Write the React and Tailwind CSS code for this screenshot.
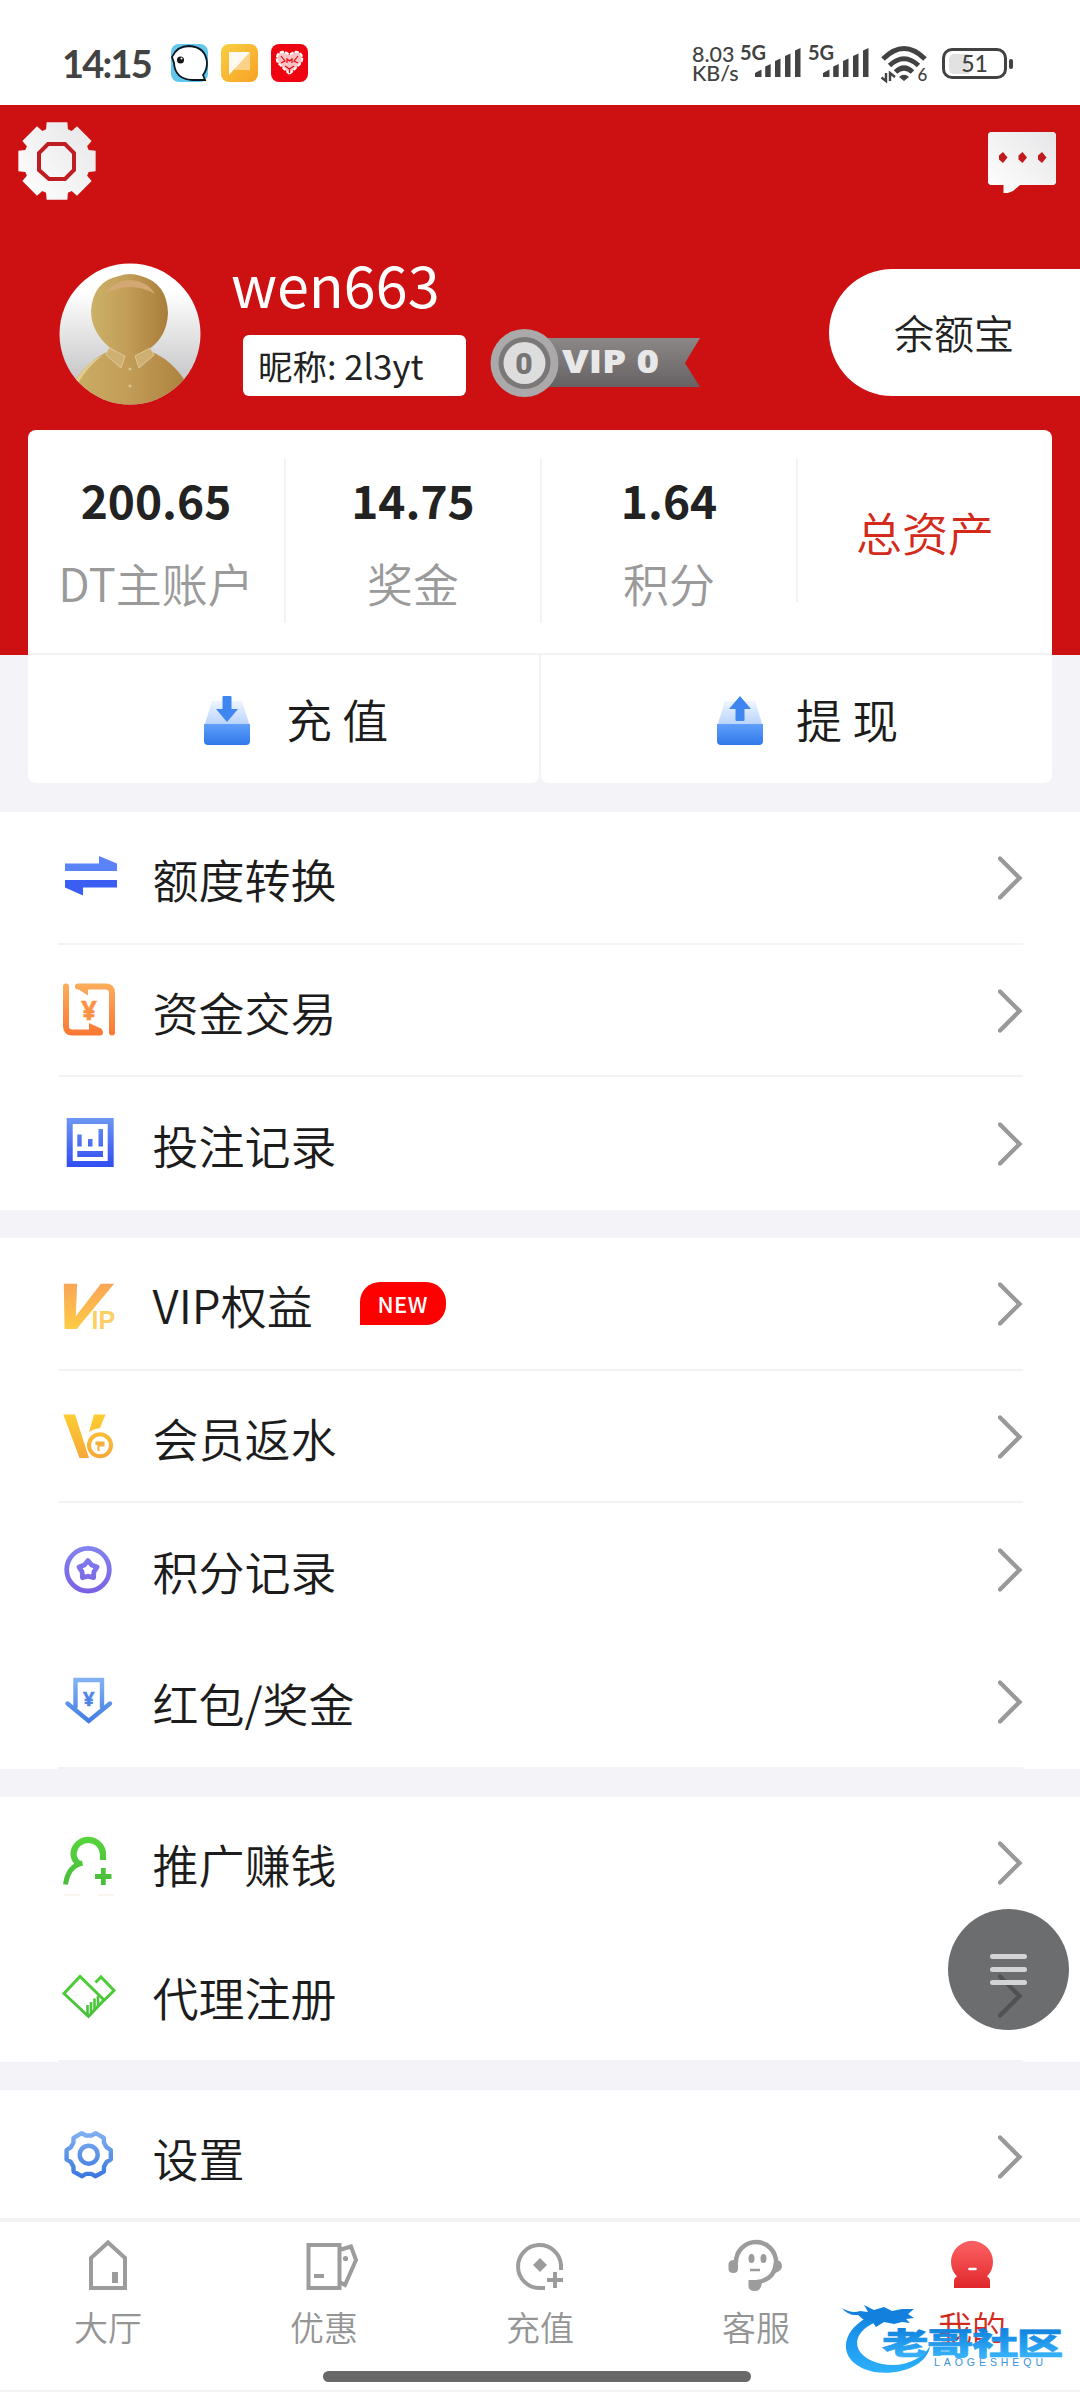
import React from "react";
import clsx from "clsx";

// closed gear outline: n teeth between the root and tip radius
const gearPath = (cx, cy, tip, root, n, tipHalf, rootHalf) => {
  const pts = [];
  for (let i = 0; i < n; i++) {
    const mid = (i * 360) / n;
    [[root, -rootHalf], [tip, -tipHalf], [tip, tipHalf], [root, rootHalf]].forEach(([r, off]) => {
      const a = ((mid + off) * Math.PI) / 180;
      pts.push(`${(cx + r * Math.cos(a)).toFixed(2)} ${(cy + r * Math.sin(a)).toFixed(2)}`);
    });
  }
  return `M${pts.join("L")}Z`;
};

const starPath = (cx, cy, outer, inner) => {
  const pts = [];
  for (let i = 0; i < 10; i++) {
    const r = i % 2 ? inner : outer;
    const a = ((i * 36 - 90) * Math.PI) / 180;
    pts.push(`${(cx + r * Math.cos(a)).toFixed(2)} ${(cy + r * Math.sin(a)).toFixed(2)}`);
  }
  return `M${pts.join("L")}Z`;
};

function Gradient({ id, from, to }) {
  return (
    <linearGradient id={id} x1="0" y1="0" x2="0" y2="56" gradientUnits="userSpaceOnUse">
      <stop stopColor={from} />
      <stop offset="1" stopColor={to} />
    </linearGradient>
  );
}

function MenuIcon({ id, from, to, children }) {
  return (
    <svg className="w-14 h-14 shrink-0 overflow-visible" viewBox="0 0 56 56" fill="none">
      <defs><Gradient id={id} from={from} to={to} /></defs>
      {children}
    </svg>
  );
}

const TransferIcon = () => (
  <MenuIcon id="transfer" from="#6c95fb" to="#2f4ff0">
    <path d="M3 13.5H37V6L55 13.5V21H3Z" fill="#5b83f8" />
    <path d="M3 30H55V37.5H21V45.5L3 37.5Z" fill="#3a5ef2" />
  </MenuIcon>
);

const FundsIcon = () => (
  <MenuIcon id="funds" from="#fbae5c" to="#fb7430">
    <path d="M4 3.5V43Q4 49.5 10.5 49.5H38M50 49.5V10Q50 3.5 43.5 3.5H16" stroke="url(#funds)" strokeWidth="6" strokeLinecap="round" />
    <path d="M13 4L26 12.5V3ZM27 40L40 46V51H27Z" fill="url(#funds)" />
    <text x="27" y="37" textAnchor="middle" fontSize="27" fontWeight="700" fontFamily="Noto Sans" fill="#fb9243" stroke="#fb9243" strokeWidth=".6">¥</text>
  </MenuIcon>
);

const BetsIcon = () => (
  <MenuIcon id="bets" from="#6f9af2" to="#2a45f3">
    <path d="M7.7 5H48.7V48H7.7Z" stroke="url(#bets)" strokeWidth="6" />
    <path d="M15.3 18.5H19.7V30.5H15.3ZM26 23H30.5V30.5H26ZM36.5 13H41V30.5H36.5ZM15.3 35H41V41H15.3Z" fill="url(#bets)" />
  </MenuIcon>
);

const VipIcon = () => (
  <MenuIcon id="vip" from="#fba650" to="#fdd052">
    <defs>
      <linearGradient id="vipV" x1="0" y1="-45" x2="0" y2="0" gradientUnits="userSpaceOnUse">
        <stop stopColor="#fba457" /><stop offset="1" stopColor="#fdca45" />
      </linearGradient>
    </defs>
    <text transform="translate(-15 51.5) skewX(-22)" fontSize="63" fontWeight="700" fontFamily="Liberation Sans" fill="url(#vipV)" stroke="url(#vipV)" strokeWidth="2" textLength="48" lengthAdjust="spacingAndGlyphs">V</text>
    <text x="29.5" y="52.5" fontSize="25" fontWeight="700" fontFamily="Liberation Sans" fill="#fccf66">IP</text>
  </MenuIcon>
);

const RebateIcon = () => (
  <MenuIcon id="rebate" from="#fdd22f" to="#f6a23a">
    <path d="M1.3 5.6H13L27 49H17.5ZM32 5.6H43.5L38 19Q31 20 27 23Z" fill="url(#rebate)" />
    <circle cx="38" cy="36.3" r="11" stroke="url(#rebate)" strokeWidth="4" />
    <path d="M33.5 32.5H42.5V37.5H37.5V42H35.5V36H33.5Z" fill="#f6ae3c" />
  </MenuIcon>
);

const PointsIcon = () => (
  <MenuIcon id="points" from="#8288f0" to="#7a5ce2">
    <circle cx="26" cy="27.7" r="21.3" stroke="url(#points)" strokeWidth="4.8" />
    <path d={starPath(26, 28, 9.5, 6.2)} stroke="url(#points)" strokeWidth="4.8" strokeLinejoin="round" />
  </MenuIcon>
);

const BonusIcon = () => (
  <MenuIcon id="bonus" from="#8ab8f6" to="#3672e0">
    <path d="M13.5 33V6H40V33M5.5 29.5L26.7 47L48 29.5" stroke="url(#bonus)" strokeWidth="4.4" strokeLinecap="round" />
    <text x="26.7" y="32" textAnchor="middle" fontSize="20" fontWeight="700" fontFamily="Noto Sans" fill="#4a84e8" stroke="#4a84e8" strokeWidth=".5">¥</text>
  </MenuIcon>
);

const PromoteIcon = () => (
  <MenuIcon id="promote" from="#57d53c" to="#48b93c">
    <path d="M41 25V18.5A14.8 14.8 0 0 0 11.5 18.5Q11.5 25 17.5 29.5" stroke="url(#promote)" strokeWidth="6.2" />
    <path d="M20.5 28Q6 31 3.5 49.5" stroke="url(#promote)" strokeWidth="5" />
    <path d="M33 41.5H49.5M41.3 33V50" stroke="url(#promote)" strokeWidth="4.8" />
    <path d="M2 60H18M36 60H52" stroke="#f3ead9" strokeWidth="1" />
  </MenuIcon>
);

const AgentIcon = () => (
  <MenuIcon id="agent" from="#4fd238" to="#49bd3c">
    <path d="M2 25.5L18 8.5L42 32L26.5 48.5ZM33.5 14.5L39 9L52 22.5L42 32.5" stroke="url(#agent)" strokeWidth="3" />
    <path d="M25.5 37V48M29 34V45M32.5 30.5V42M36 28V38.5" stroke="url(#agent)" strokeWidth="2.6" />
  </MenuIcon>
);

const SettingsIcon = () => (
  <MenuIcon id="settings" from="#86b4f3" to="#2f6fdb">
    <path d={gearPath(26.7, 25.7, 22.6, 19.4, 6, 12, 22)} stroke="url(#settings)" strokeWidth="4.4" strokeLinejoin="round" />
    <circle cx="26.7" cy="25.7" r="9" stroke="url(#settings)" strokeWidth="4.4" />
  </MenuIcon>
);

const groups = [
  [
    { label: "额度转换", icon: TransferIcon, line: true },
    { label: "资金交易", icon: FundsIcon, line: true },
    { label: "投注记录", icon: BetsIcon },
  ],
  [
    { label: "VIP权益", icon: VipIcon, line: true, badge: "NEW" },
    { label: "会员返水", icon: RebateIcon, line: true },
    { label: "积分记录", icon: PointsIcon },
    { label: "红包/奖金", icon: BonusIcon, line: true },
  ],
  [
    { label: "推广赚钱", icon: PromoteIcon },
    { label: "代理注册", icon: AgentIcon, line: true },
  ],
  [{ label: "设置", icon: SettingsIcon }],
];

function Signal() {
  return (
    <div className="flex items-start h-[34px]">
      <span className="w-[28px] text-[20px] leading-[17px] font-bold whitespace-nowrap">5G</span>
      <svg className="-ml-[13px] w-[46px] h-[34px]" viewBox="0 0 46 34" fill="#424242">
        <path d="M0 33V29L6.5 25.5V33ZM10.2 33V22.5L15.7 20V33ZM20 33V17L25.5 14.5V33ZM30 33V12L35.5 9.5V33ZM40 33V6.5L45.5 4V33Z" />
      </svg>
    </div>
  );
}

function StatusBar() {
  return (
    <div className="h-[105px] shrink-0 bg-white flex items-start pt-[44px] pl-[62px] pr-[67px] text-[#424242]">
      <span className="w-[109px] -mt-px font-['Lato'] text-[38px] leading-[40px] font-bold tracking-[-1.8px]">14:15</span>
      <div className="flex gap-[13px]">
        <svg className="w-[37px] h-[38px]" viewBox="0 0 37 38">
          <rect width="37" height="38" rx="8" fill="#62c7ea" />
          <path d="M1 13Q6 2 18 2Q35 3 36 19Q36 26 32 31L34 36H21Q4 35 3 19Z" fill="#fff" stroke="#0b1620" strokeWidth="1.8" />
          <circle cx="9.5" cy="16" r="3.5" fill="#161616" />
          <circle cx="10.5" cy="14.5" r="1" fill="#fff" />
        </svg>
        <svg className="w-[37px] h-[38px]" viewBox="0 0 37 38">
          <defs>
            <linearGradient id="note" x1="0" y1="0" x2="1" y2="1">
              <stop stopColor="#f8cf42" /><stop offset="1" stopColor="#f8a125" />
            </linearGradient>
          </defs>
          <rect width="37" height="38" rx="8" fill="url(#note)" />
          <path d="M8 8H29V26H14Z" fill="#fbd287" />
          <path d="M8 8H29L8 31Z" fill="#fffaf0" />
        </svg>
        <svg className="w-[37px] h-[38px]" viewBox="0 0 37 38">
          <rect width="37" height="38" rx="8" fill="#ee0410" />
          <path d="M18.5 30L7 19Q4 13 8 9Q13 6 18.5 11Q24 6 29 9Q33 13 30 19Z" fill="#f9c3c3" stroke="#fff" strokeWidth="2" strokeDasharray="4 1.5" />
          <path d="M10 12L14 17L10 19M27 12L23 17L27 19M14 22L18.5 25L23 22M18.5 25V29M16 19V15L18.5 17L21 15V19" stroke="#ee0410" strokeWidth="1.2" fill="none" />
        </svg>
      </div>
      <div className="ml-auto flex items-start font-['Lato'] font-medium">
        <div className="w-[48px] text-[21.5px] leading-[19px] pt-px whitespace-nowrap">
          <div>8.03</div>
          <div>KB/s</div>
        </div>
        <Signal />
        <div className="w-[7px]" />
        <Signal />
        <svg className="ml-[12px] w-[48px] h-[38px] overflow-visible" viewBox="0 0 48 38" fill="none" stroke="#424242">
          <path d="M2 15Q23 -6 44 15" strokeWidth="5" />
          <path d="M8.5 21.5Q23 8 37.5 21.5" strokeWidth="5" />
          <path d="M14.5 28Q23 20 31.5 28" strokeWidth="5" />
          <path d="M18 33Q23 28.5 28 33L23 37Z" fill="#424242" stroke="none" />
          <path d="M5 29V37L0.5 33.5M9 37V29L14 33" strokeWidth="2.4" />
          <text x="36.5" y="37" fontSize="17" fontFamily="Lato" fill="#424242" stroke="none">6</text>
        </svg>
        <div className="ml-[13px] mt-[4px] flex items-center">
          <div className="relative w-[65px] h-[31px] rounded-[10px] border-[3px] border-[#424242] flex items-center justify-center">
            <div className="absolute left-[4px] top-[3px] w-[20px] h-[20px] rounded-l-[5px] bg-[#e2e2e2]" />
            <span className="relative text-[23px] leading-[25px] font-medium">51</span>
          </div>
          <div className="ml-[2px] w-[4px] h-[10px] rounded-[2px] bg-[#424242]" />
        </div>
      </div>
    </div>
  );
}

function Avatar() {
  return (
    <svg className="mt-[11px] w-[142px] h-[142px] shrink-0" viewBox="0 0 142 142">
      <defs>
        <linearGradient id="avatarBg" x1="0" y1="0" x2="0" y2="1">
          <stop offset=".2" stopColor="#fff" /><stop offset=".8" stopColor="#c9c9cb" />
        </linearGradient>
        <linearGradient id="gold" x1="0" y1="0" x2="1" y2="0">
          <stop stopColor="#cdb168" /><stop offset=".5" stopColor="#c19c56" /><stop offset="1" stopColor="#a97c3a" />
        </linearGradient>
        <clipPath id="avatarClip"><circle cx="71" cy="71" r="70.5" /></clipPath>
      </defs>
      <g clipPath="url(#avatarClip)">
        <rect width="142" height="142" fill="url(#avatarBg)" />
        <path d="M4 142Q18 102 50 88H91Q122 100 138 142Z" fill="url(#gold)" />
        <path d="M16 118Q26 100 44 92Q28 104 18 122Z" fill="#dfcb92" />
        <path d="M32 48Q34 18 60 13Q71 9 82 13Q108 20 109 50Q108 74 90 86Q80 92 70 92Q60 91 50 84Q32 68 32 48Z" fill="url(#gold)" />
        <path d="M46 31Q54 18 71 17Q88 18 96 31Q84 24 71 24Q58 24 46 31Z" fill="#d4a873" />
        <path d="M50 85L47 92L62 105L66 93ZM91 85L95 92L80 105L76 93Z" fill="#cfb073" stroke="#dfc796" />
        <circle cx="71" cy="106" r="1.5" fill="#d9c48e" />
        <circle cx="71" cy="123" r="1.5" fill="#d9c48e" />
      </g>
    </svg>
  );
}

function VipBadge() {
  return (
    <svg className="w-[212px] h-[70px]" viewBox="0 0 212 70">
      <defs>
        <linearGradient id="ribbon" x1="0" y1="0" x2="0" y2="1">
          <stop stopColor="#8c8888" /><stop offset="1" stopColor="#666162" />
        </linearGradient>
      </defs>
      <path d="M34 10H210L195 35L210 59H34Z" fill="url(#ribbon)" />
      <circle cx="34.5" cy="35" r="34" fill="#aba9a9" />
      <circle cx="34.5" cy="35" r="26" fill="#7b7878" />
      <circle cx="34.5" cy="35" r="21" fill="#dedddd" />
      <text x="34" y="46" textAnchor="middle" fontSize="30" fontWeight="900" fontFamily="Roboto" fill="#777475">0</text>
      <text x="72" y="45" fontSize="32" fontWeight="800" fontFamily="Open Sans" fill="#e9e8e8" textLength="97" lengthAdjust="spacingAndGlyphs">VIP 0</text>
    </svg>
  );
}

const TrayIcon = ({ up }) => (
  <svg className="w-[46px] h-[50px] shrink-0" viewBox="0 0 46 50">
    <defs>
      <linearGradient id="trayBack" x1="0" y1="0" x2="0" y2="1">
        <stop stopColor="#eef5ff" /><stop offset="1" stopColor="#b9d3fc" />
      </linearGradient>
      <linearGradient id="trayFront" x1="0" y1="0" x2="0" y2="1">
        <stop stopColor="#60a0fa" /><stop offset="1" stopColor="#2f78ea" />
      </linearGradient>
    </defs>
    <path d="M8 5H38L45.5 29H.5Z" fill="url(#trayBack)" />
    <path d="M0 28H46V45Q46 49 42 49H4Q0 49 0 45Z" fill="url(#trayFront)" />
    <path d={up ? "M23 0L34 13H27.5V24Q27.5 25 26.5 25H19.5Q18.5 25 18.5 24V13H12Z" : "M18.5 1Q18.5 0 19.5 0H26.5Q27.5 0 27.5 1V13H34L23 26L12 13H18.5Z"} fill="#3f86f1" />
  </svg>
);

function Stat({ value, label }) {
  return (
    <div className="w-[256px] first:w-[258px] flex">
      <div className="flex-1 flex flex-col items-center pt-[34px]">
        <span className="text-[46px] leading-[70px] font-bold text-[#222]">{value}</span>
        <span className="mt-[15px] text-[46px] leading-[66px] font-[350] text-[#9a9a9a] whitespace-nowrap">{label}</span>
      </div>
      <div className={clsx("mt-[29px] w-[2px] bg-[#f3f3f5]", label === "积分" ? "h-[143px]" : "h-[164px]")} />
    </div>
  );
}

function Header() {
  return (
    <div className="h-[550px] shrink-0 bg-[#cd1012] flex flex-col">
      <div className="h-[147px] shrink-0 flex justify-between pl-[17px] pr-[24px] pt-[16px]">
        <svg className="w-[80px] h-[80px]" viewBox="0 0 80 80">
          <defs>
            <linearGradient id="silver" x1="0" y1="1" x2="1" y2="0">
              <stop stopColor="#fff" /><stop offset="1" stopColor="#e6e6e8" />
            </linearGradient>
          </defs>
          <path d={gearPath(40, 40, 40, 33.5, 8, 15, 19)} fill="url(#silver)" />
          <path d="M31 23H48L57 32V49L48 58H32L22 49V32Z" fill="none" stroke="#c01d22" strokeWidth="4" />
        </svg>
        <svg className="mt-[11px] w-[68px] h-[62px]" viewBox="0 0 68 62">
          <path d="M2 0H66L68 2V51L66 53H32L25 59L20 61H15.5V53H2L0 51V2Z" fill="url(#silver)" />
          <path d="M15 20L19.5 25.5L15 31L11 27.5V23.5ZM34.5 20L39 25.5L34.5 31L30.5 27.5V23.5ZM54 20L58.5 25.5L54 31L50 27.5V23.5Z" fill="#c2191c" />
        </svg>
      </div>
      <div className="h-[178px] shrink-0 flex items-start pl-[59px]">
        <Avatar />
        <div className="ml-[31px]">
          <div className="-mt-[4px] -ml-px text-[57.5px] leading-[70px] text-white">wen663</div>
          <div className="mt-[10px] flex items-center gap-[24px]">
            <div className="ml-[11px] mt-[5px] w-[223px] h-[61px] rounded-md bg-white pl-[15px] text-[34.5px] leading-[60px] text-[#222]">昵称: 2l3yt</div>
            <VipBadge />
          </div>
        </div>
        <div className="ml-auto mt-[17px] w-[251px] h-[127px] rounded-l-full bg-white pl-[65px] text-[40px] leading-[127px] font-[350] text-[#222]">余额宝</div>
      </div>
      <div className="flex-1 mx-[28px] rounded-t-lg bg-white flex border-b-2 border-[#f3f3f5]">
        <Stat value="200.65" label="DT主账户" />
        <Stat value="14.75" label="奖金" />
        <Stat value="1.64" label="积分" />
        <div className="flex-1 pt-[68px] text-center text-[46px] leading-[66px] font-[350] text-[#d42a1c]">总资产</div>
      </div>
    </div>
  );
}

function MenuRow({ item }) {
  const Icon = item.icon;
  return (
    <div className={clsx("h-[132.7px] mx-[57.5px] pl-[4px] pt-[2px] flex items-center border-b-2", item.line ? "border-[#f3f3f6]" : "border-transparent")}>
      <Icon />
      <span className="ml-[35px] text-[46px] leading-[66px] font-[350] text-[#1c1c1c]">{item.label}</span>
      {item.badge && (
        <span className="ml-[47px] -mt-[2px] w-[86px] h-[43px] rounded-t-[20px] rounded-br-[20px] bg-[#fe0000] text-center text-[22px] leading-[43px] font-medium tracking-[0.5px] text-white">{item.badge}</span>
      )}
      <svg className="ml-auto w-[25px] h-[44px]" viewBox="0 0 25 44" fill="none">
        <path d="M2 2.5L21.5 22L2 41.5" stroke="#999" strokeWidth="4.4" strokeLinecap="round" />
      </svg>
    </div>
  );
}

const tabs = [
  {
    label: "大厅",
    icon: (
      <g stroke="#9c9c9c" strokeWidth="4">
        <path d="M11 20L28 4.5L45 20V50H11Z" />
        <path d="M35 34V45" strokeWidth="6" />
      </g>
    ),
  },
  {
    label: "优惠",
    icon: (
      <g stroke="#9c9c9c" strokeWidth="4">
        <path d="M12.5 7H43.5V50H12.5ZM43.5 12L55 8.5L60 22L49 47L43.5 44" />
        <path d="M18 38H28" />
        <circle cx="49.5" cy="20.5" r="2.6" fill="#9c9c9c" stroke="none" />
      </g>
    ),
  },
  {
    label: "充值",
    icon: (
      <g stroke="#9c9c9c" strokeWidth="4">
        <path d="M49 32V27A21.5 21.5 0 1 0 27.5 50H33" />
        <path d="M28 20L35 27L28 34L21 27Z" fill="#9c9c9c" stroke="none" />
        <path d="M35 42H51M43 34V50" />
      </g>
    ),
  },
  {
    label: "客服",
    icon: (
      <g stroke="#9c9c9c" strokeWidth="4.5">
        <path d="M8 24A20 20 0 0 1 48 24Q47 42 29 44" />
        <path d="M.5 26Q1 22 6 22H10V31Q10 35 5.5 35Q.5 35 .5 31ZM47 22Q54 22 54 28Q54 33 47 35ZM20.5 42H34Q34 53 27 53Q20.5 53 20.5 48Z" fill="#9c9c9c" stroke="none" />
        <ellipse cx="23.5" cy="20.5" rx="3" ry="4.5" fill="#9c9c9c" stroke="none" />
        <ellipse cx="35.5" cy="20.5" rx="3" ry="4.5" fill="#9c9c9c" stroke="none" />
        <path d="M22 32H32" strokeWidth="2.5" />
      </g>
    ),
  },
  {
    label: "我的",
    active: true,
    icon: (
      <g>
        <defs><Gradient id="me" from="#ff6668" to="#dc2024" /></defs>
        <path d="M10 50V43Q10 40 13 38.5A21 21 0 1 1 43 38.5Q46 40 46 43V50Z" fill="url(#me)" />
        <path d="M25.5 31H31.5" stroke="#fff" strokeWidth="2.6" strokeLinecap="round" />
      </g>
    ),
  },
];

function TabBar() {
  return (
    <div className="flex-1 border-t-[4px] border-[#f3f3f4] bg-white flex flex-col">
      <div className="h-[149px] shrink-0 flex pt-[16px]">
        {tabs.map((t) => (
          <div key={t.label} className="w-[216px] flex flex-col items-center">
            <svg className="w-14 h-14 overflow-visible" viewBox="0 0 56 56" fill="none">{t.icon}</svg>
            <span className={clsx("mt-[8px] text-[34px] leading-[50px] font-[350]", t.active ? "text-[#d42a1c]" : "text-[#959595]")}>{t.label}</span>
          </div>
        ))}
      </div>
      <div className="ml-[323px] w-[428px] h-[11px] rounded-full bg-[#686868]" />
      <div className="mt-[8px] h-[2px] bg-[#f4f4f4]" />
    </div>
  );
}

function Watermark() {
  return (
    <svg className="absolute left-[840px] top-[2296px] w-[228px] h-[80px]" viewBox="0 0 228 80">
      <defs>
        <linearGradient id="wm" x1="0" y1="10" x2="0" y2="76" gradientUnits="userSpaceOnUse">
          <stop stopColor="#0f7fdc" /><stop offset="1" stopColor="#2cb0fb" />
        </linearGradient>
        <linearGradient id="wmText" x1="0" y1="-26" x2="0" y2="2" gradientUnits="userSpaceOnUse">
          <stop stopColor="#0f80dd" /><stop offset="1" stopColor="#35b0f8" />
        </linearGradient>
      </defs>
      <path d="M26 22C-2 38 -2 68 34 76C62 80 88 68 90 50C82 64 62 72 42 68C12 62 8 38 36 26Z" fill="url(#wm)" />
      <path d="M2 12Q12 18 20 15L28 16L24 9L34 14L44 11L52 15L62 13L74 13L68 18L74 22L66 23L70 27L62 26L54 28L44 26L36 31L32 25L24 24L18 19Q8 20 2 12Z" fill="#1280dc" />
      <text transform="translate(42 58) scale(1.55 1)" fontSize="30" fontWeight="900" fontFamily="Noto Sans CJK SC" fill="url(#wmText)" stroke="url(#wmText)" strokeWidth=".6" textLength="117">老哥社区</text>
      <text x="94" y="70" fontSize="10.5" fontWeight="400" fontFamily="Liberation Sans" fill="#3a93dc" textLength="109">LAOGESHEQU</text>
    </svg>
  );
}

export default function App() {
  return (
    <div className="relative w-[1080px] h-[2400px] overflow-hidden bg-[#f3f3f8] flex flex-col font-['Noto_Sans_CJK_SC',sans-serif]">
      <StatusBar />
      <Header />

      <div className="mx-[28px] h-[128px] shrink-0 flex">
        <div className="flex-1 rounded-b-lg bg-white flex pl-[176px] pt-[41px]">
          <TrayIcon />
          <span className="ml-[36px] -mt-[11px] text-[46px] leading-[66px] font-[350] text-[#1c1c1c] whitespace-pre">充 值</span>
        </div>
        <div className="mt-[14px] mb-[14px] w-[2px] bg-[#f3f3f5]" />
        <div className="flex-1 rounded-b-lg bg-white flex pl-[176px] pt-[41px]">
          <TrayIcon up />
          <span className="ml-[33px] -mt-[11px] text-[46px] leading-[66px] font-[350] text-[#1c1c1c] whitespace-pre">提 现</span>
        </div>
      </div>

      <div className="mt-[29px] shrink-0 flex flex-col gap-[28px]">
        {groups.map((rows, i) => (
          <div key={i} className={clsx("bg-white", i === groups.length - 1 && "h-[128px] overflow-hidden")}>
            {rows.map((item) => <MenuRow key={item.label} item={item} />)}
          </div>
        ))}
      </div>

      <TabBar />

      <div className="absolute left-[948px] top-[1909px] w-[121px] h-[121px] rounded-full bg-[#323438]/72 flex flex-col items-center justify-center gap-[8px]">
        <div className="w-[37px] h-[5px] rounded-full bg-[#d3d3d5]" />
        <div className="w-[37px] h-[5px] rounded-full bg-[#d3d3d5]" />
        <div className="w-[37px] h-[5px] rounded-full bg-[#d3d3d5]" />
      </div>
      <Watermark />
    </div>
  );
}
